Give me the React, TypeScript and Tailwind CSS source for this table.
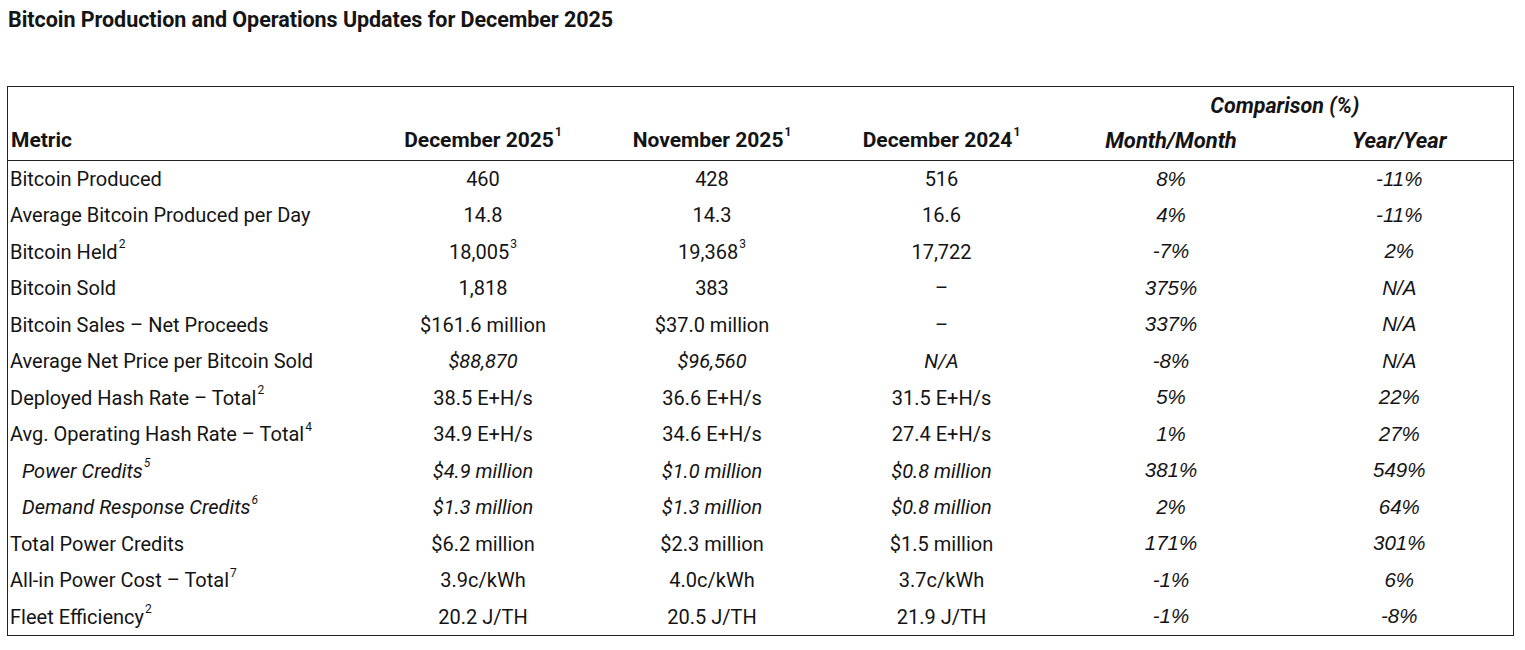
import type { ReactNode } from "react";

type Row = {
  metric: ReactNode;
  indent?: boolean;
  italic?: boolean;
  values: ReactNode[];
  valueItalic?: boolean[];
  compare: [string, string];
};

const Sup = ({ children }: { children: ReactNode }) => (
  <sup className="relative -top-[3px] ml-px align-super text-[12px] leading-none">{children}</sup>
);

const rows: Row[] = [
  { metric: "Bitcoin Produced", values: ["460", "428", "516"], compare: ["8%", "-11%"] },
  {
    metric: "Average Bitcoin Produced per Day",
    values: ["14.8", "14.3", "16.6"],
    compare: ["4%", "-11%"],
  },
  {
    metric: (
      <>
        Bitcoin Held<Sup>2</Sup>
      </>
    ),
    values: [
      <>
        18,005<Sup>3</Sup>
      </>,
      <>
        19,368<Sup>3</Sup>
      </>,
      "17,722",
    ],
    compare: ["-7%", "2%"],
  },
  { metric: "Bitcoin Sold", values: ["1,818", "383", "–"], compare: ["375%", "N/A"] },
  {
    metric: "Bitcoin Sales – Net Proceeds",
    values: ["$161.6 million", "$37.0 million", "–"],
    compare: ["337%", "N/A"],
  },
  {
    metric: "Average Net Price per Bitcoin Sold",
    values: ["$88,870", "$96,560", "N/A"],
    valueItalic: [true, true, true],
    compare: ["-8%", "N/A"],
  },
  {
    metric: (
      <>
        Deployed Hash Rate – Total<Sup>2</Sup>
      </>
    ),
    values: ["38.5 E+H/s", "36.6 E+H/s", "31.5 E+H/s"],
    compare: ["5%", "22%"],
  },
  {
    metric: (
      <>
        Avg. Operating Hash Rate – Total<Sup>4</Sup>
      </>
    ),
    values: ["34.9 E+H/s", "34.6 E+H/s", "27.4 E+H/s"],
    compare: ["1%", "27%"],
  },
  {
    metric: (
      <>
        Power Credits<Sup>5</Sup>
      </>
    ),
    indent: true,
    italic: true,
    values: ["$4.9 million", "$1.0 million", "$0.8 million"],
    valueItalic: [true, true, true],
    compare: ["381%", "549%"],
  },
  {
    metric: (
      <>
        Demand Response Credits<Sup>6</Sup>
      </>
    ),
    indent: true,
    italic: true,
    values: ["$1.3 million", "$1.3 million", "$0.8 million"],
    valueItalic: [true, true, true],
    compare: ["2%", "64%"],
  },
  {
    metric: "Total Power Credits",
    values: ["$6.2 million", "$2.3 million", "$1.5 million"],
    compare: ["171%", "301%"],
  },
  {
    metric: (
      <>
        All-in Power Cost – Total<Sup>7</Sup>
      </>
    ),
    values: ["3.9c/kWh", "4.0c/kWh", "3.7c/kWh"],
    compare: ["-1%", "6%"],
  },
  {
    metric: (
      <>
        Fleet Efficiency<Sup>2</Sup>
      </>
    ),
    values: ["20.2 J/TH", "20.5 J/TH", "21.9 J/TH"],
    compare: ["-1%", "-8%"],
  },
];

export default function App() {
  return (
    <div className="min-h-[650px] bg-white px-[7px] pt-[7px] font-['Roboto',sans-serif] text-[#141414]">
      <h1 className="pl-px text-[21.5px] leading-[26px] font-bold tracking-[-0.05px]">
        Bitcoin Production and Operations Updates for December 2025
      </h1>

      <table className="mt-[53px] w-[1506px] table-fixed border-collapse border border-[#222]">
        <colgroup>
          <col className="w-[361px]" />
          <col className="w-[229px]" />
          <col className="w-[229px]" />
          <col className="w-[230px]" />
          <col className="w-[229px]" />
          <col className="w-[228px]" />
        </colgroup>
        <thead>
          <tr className="h-[36px]">
            <th colSpan={4} />
            <th colSpan={2} className="pt-[2px] text-center text-[21.5px] font-bold italic">
              Comparison (%)
            </th>
          </tr>
          <tr className="h-[38px] border-b border-[#222] text-[21px] font-bold">
            <th className="pb-[2px] pl-[3px] text-left">Metric</th>
            <th className="pb-[2px] text-center">
              December 2025<Sup>1</Sup>
            </th>
            <th className="pb-[2px] text-center">
              November 2025<Sup>1</Sup>
            </th>
            <th className="pb-[2px] text-center">
              December 2024<Sup>1</Sup>
            </th>
            <th className="pb-[2px] text-center text-[22px] italic">Month/Month</th>
            <th className="pb-[2px] text-center text-[22px] italic">Year/Year</th>
          </tr>
        </thead>
        <tbody className="text-[20px]">
          {rows.map((row, i) => (
            <tr key={i} className="h-[36.5px]">
              <td
                className={[
                  "whitespace-nowrap p-0 align-middle",
                  row.indent ? "pl-[14px]" : "pl-[2px]",
                  row.italic ? "italic" : "",
                ].join(" ")}
              >
                {row.metric}
              </td>
              {row.values.map((v, j) => (
                <td
                  key={j}
                  className={[
                    "p-0 text-center whitespace-nowrap",
                    row.valueItalic?.[j] ? "italic" : "",
                  ].join(" ")}
                >
                  {v}
                </td>
              ))}
              {row.compare.map((c, j) => (
                <td
                  key={`c${j}`}
                  className="p-0 text-center font-['Liberation_Sans',sans-serif] text-[20.5px] italic whitespace-nowrap"
                >
                  {c}
                </td>
              ))}
            </tr>
          ))}
        </tbody>
      </table>
    </div>
  );
}
